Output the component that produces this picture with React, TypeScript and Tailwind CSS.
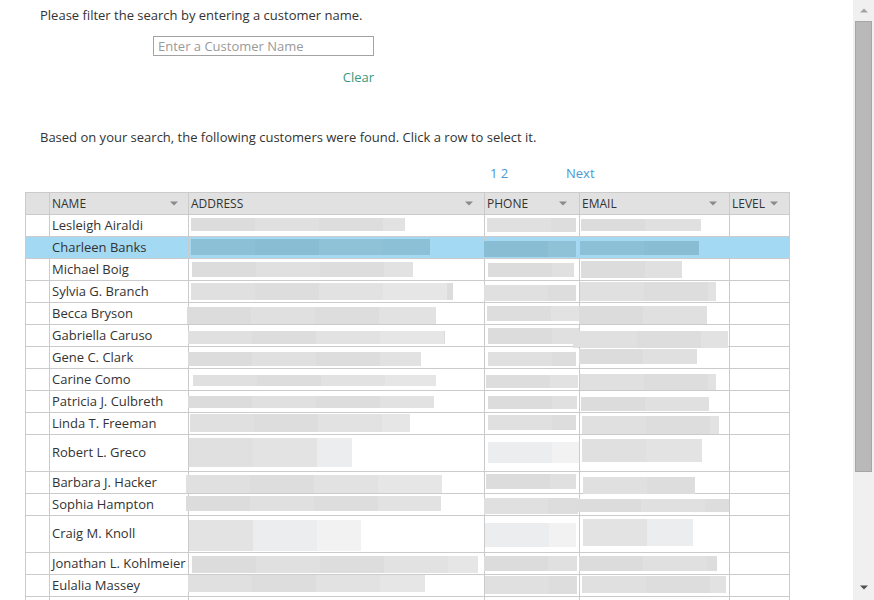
type Bar = [number, number, number, number];

type Row = {
  name: string;
  tall?: boolean;
  selected?: boolean;
  light?: boolean;
  addr: Bar;
  phone: Bar;
  email: Bar;
};

const rows: Row[] = [
  { name: "Lesleigh Airaldi", addr: [2, 3, 214, 13], phone: [2, 3, 89, 14], email: [1, 4, 120, 12] },
  { name: "Charleen Banks", selected: true, addr: [2, 2, 239, 16], phone: [-1, 4, 92, 16], email: [0, 4, 119, 14] },
  { name: "Michael Boig", addr: [3, 3, 221, 15], phone: [3, 4, 86, 14], email: [1, 2, 101, 17] },
  { name: "Sylvia G. Branch", addr: [2, 2, 262, 17], phone: [-1, 4, 92, 16], email: [0, 1, 136, 19] },
  { name: "Becca Bryson", addr: [-2, 4, 249, 17], phone: [2, 3, 92, 15], email: [-1, 3, 128, 18] },
  { name: "Gabriella Caruso", addr: [-1, 6, 257, 13], phone: [3, 3, 91, 16], email: [-7, 6, 155, 17] },
  { name: "Gene C. Clark", addr: [-1, 5, 233, 14], phone: [3, 5, 88, 14], email: [-1, 2, 118, 15] },
  { name: "Carine Como", addr: [4, 6, 243, 11], phone: [1, 6, 92, 13], email: [0, 5, 136, 16] },
  { name: "Patricia J. Culbreth", addr: [-1, 5, 246, 12], phone: [3, 5, 89, 13], email: [1, 6, 128, 14] },
  { name: "Linda T. Freeman", addr: [1, 1, 220, 18], phone: [3, 2, 88, 15], email: [2, 3, 137, 18] },
  { name: "Robert L. Greco", tall: true, light: true, addr: [0, 3, 163, 29], phone: [3, 7, 91, 21], email: [2, 4, 120, 23] },
  { name: "Barbara J. Hacker", addr: [-3, 3, 256, 18], phone: [1, 2, 90, 15], email: [3, 5, 112, 17] },
  { name: "Sophia Hampton", addr: [-3, 2, 255, 15], phone: [-1, 4, 94, 16], email: [-3, 5, 152, 13] },
  { name: "Craig M. Knoll", tall: true, light: true, addr: [0, 4, 172, 31], phone: [0, 7, 91, 24], email: [3, 3, 110, 27] },
  { name: "Jonathan L. Kohlmeier", addr: [3, 3, 286, 17], phone: [-1, 3, 93, 15], email: [-1, 3, 138, 15] },
  { name: "Eulalia Massey", addr: [-1, 0, 237, 17], phone: [0, 1, 92, 18], email: [2, 1, 144, 17] },
  { name: "", addr: [0, 3, 230, 15], phone: [1, 3, 90, 15], email: [1, 3, 130, 15] },
];

const grey = ["#dcdcdc", "#e0e0e0", "#dddddd", "#e2e2e2", "#e6e6e6"];
const pale = ["#e0e0e0", "#e3e3e3", "#ecedee", "#f1f2f1", "#f3f3f3"];
const blue = ["#88bcd3", "#8cc0d7", "#89bdd4", "#8fc1d7", "#8cc0d6"];

function Blur({ b, row, shift }: { b: Bar; row: Row; shift: number }) {
  const [ml, mt, w, h] = b;
  const palette = row.selected ? blue : row.light ? pale : grey;
  const segs: number[] = [];
  for (let x = 0; x < w; x += 64) segs.push(Math.min(64, w - x));
  return (
    <div className="flex shrink-0" style={{ marginLeft: ml, marginTop: mt, width: w, height: h }}>
      {segs.map((s, i) => (
        <div key={i} className="h-full" style={{ width: s, background: palette[(i + shift) % palette.length] }} />
      ))}
    </div>
  );
}

function Caret() {
  return (
    <svg width="8" height="5" viewBox="0 0 8 5" className="shrink-0">
      <path d="M0 0.5h8L4 4.5z" fill="#8a8a8a" />
    </svg>
  );
}

function HeadCell({ label, className }: { label: string; className: string }) {
  return (
    <div className={`${className} flex items-center justify-between pl-[2px] border-r border-[#cbcbcb]`}>
      <span>{label}</span>
      <Caret />
    </div>
  );
}

export default function App() {
  return (
    <div className="flex h-[600px] overflow-hidden bg-white font-['Open_Sans',sans-serif] text-[13px] text-[#333]">
      <div className="flex-1 flex flex-col pt-[6px]">
        <p className="pl-[40px] leading-[18px]">Please filter the search by entering a customer name.</p>
        <input
          type="text"
          placeholder="Enter a Customer Name"
          className="mt-[12px] ml-[153px] w-[221px] h-[22px] border border-[#a3a3a3] px-[4px] text-[13px] placeholder:text-[#9a9a9a] outline-none"
        />
        <div className="mt-[12px] w-[374px] flex justify-end leading-[18px]">
          <a className="text-[#3b9a7d] cursor-pointer">Clear</a>
        </div>
        <p className="mt-[42px] pl-[40px] leading-[18px]">
          Based on your search, the following customers were found. Click a row to select it.
        </p>
        <div className="mt-[18px] pl-[490px] flex leading-[18px] text-[#4a97d4]">
          <span className="w-[76px]">1 2</span>
          <span>Next</span>
        </div>

        <div className="mt-[10px] ml-[25px] w-[765px] border-l border-t border-[#cbcbcb]">
          <div className="flex h-[22px] bg-[#e1e1e1] border-b border-[#cbcbcb] text-[12px] uppercase">
            <div className="w-[24px] border-r border-[#cbcbcb]" />
            <HeadCell label="Name" className="w-[139px] pr-[10px]" />
            <HeadCell label="Address" className="w-[296px] pr-[11px]" />
            <HeadCell label="Phone" className="w-[95px] pr-[12px]" />
            <HeadCell label="Email" className="w-[150px] pr-[12px]" />
            <div className="w-[60px] flex items-center gap-[5px] pl-[2px] border-r border-[#cbcbcb]">
              <span>Level</span>
              <Caret />
            </div>
          </div>

          {rows.map((r, i) => (
            <div
              key={i}
              className={`flex border-b border-[#cbcbcb] ${r.tall ? "h-[37px]" : "h-[22px]"} ${r.selected ? "bg-[#a3d9f3]" : ""}`}
            >
              <div className="w-[24px] border-r border-[#cbcbcb]" />
              <div className="w-[139px] flex items-center pl-[2px] whitespace-nowrap border-r border-[#cbcbcb]">
                {r.name}
              </div>
              <div className="w-[296px] flex items-start border-r border-[#cbcbcb]">
                <Blur b={r.addr} row={r} shift={i % 2} />
              </div>
              <div className="w-[95px] flex items-start border-r border-[#cbcbcb]">
                <Blur b={r.phone} row={r} shift={(i + 1) % 3} />
              </div>
              <div className="w-[150px] flex items-start border-r border-[#cbcbcb]">
                <Blur b={r.email} row={r} shift={(i + 2) % 2} />
              </div>
              <div className="w-[60px] border-r border-[#cbcbcb]" />
            </div>
          ))}
        </div>
      </div>

      <div className="w-[21px] h-[600px] bg-[#f0f0f0] flex flex-col items-center shrink-0">
        <div className="h-[20px] flex items-center justify-center">
          <svg width="8" height="5" viewBox="0 0 8 5">
            <path d="M4 0.5L8 4.5H0z" fill="#a3a3a3" />
          </svg>
        </div>
        <div className="mt-[1px] w-[17px] h-[451px] bg-[#b9b9b9] border border-[#a6a6a6]" />
        <div className="flex-1" />
        <div className="h-[26px] flex items-center justify-center">
          <svg width="8" height="5" viewBox="0 0 8 5">
            <path d="M0 0.5h8L4 4.5z" fill="#505050" />
          </svg>
        </div>
      </div>
    </div>
  );
}
